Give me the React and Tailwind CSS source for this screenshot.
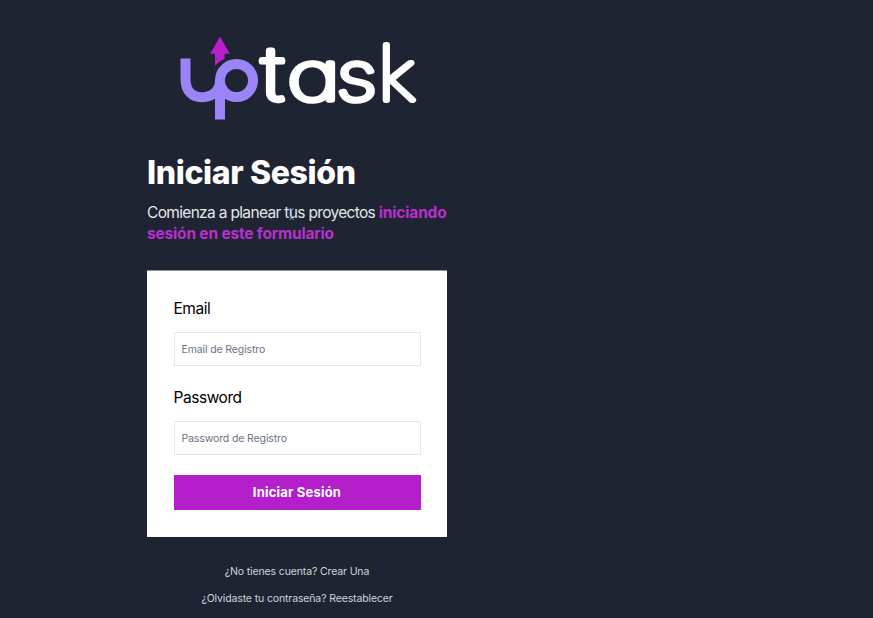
function Letter({ children, transform, className }) {
  return (
    <text
      className={className}
      style={{ fontFeatureSettings: '"cv11"' }}
      transform={transform}
      fill="#fff"
      stroke="#fff"
      strokeWidth="5.4"
      strokeLinejoin="round"
      strokeLinecap="round"
    >
      {children}
    </text>
  );
}

function Logo() {
  const inter = "font-['Inter',sans-serif] text-[66px] font-thin";
  const lato = "font-['Lato',sans-serif] text-[69px] font-thin";
  return (
    <svg
      className="mx-auto block h-[86px] w-[240px] overflow-visible"
      viewBox="177 35 240 86"
      role="img"
      aria-label="UpTask"
    >
      <path d="M220 36.5 229.8 53.8H224.5V59Q219 61 215 66V53.8H210.2Z" fill="#b91fce" />
      <g fill="none" stroke="#9b84f8" strokeWidth="10">
        <path d="M185.5 58.5V79C185.5 91 192 97.2 202 97.2C212 97.2 220 91 220 80.5" />
        <circle cx="236.5" cy="80.5" r="16.5" />
        <path d="M220 79V119.5" />
      </g>
      <Letter className={inter} transform="translate(262 99.5) scale(1.35 1.1)">t</Letter>
      <Letter className={inter} transform="translate(287.2 99.5) scale(1.38 1.02)">a</Letter>
      <Letter className={inter} transform="translate(336.5 99.5) scale(1.24 1.02)">s</Letter>
      <Letter className={lato} transform="translate(378.4 99.7) scale(1.16 1.09)">k</Letter>
    </svg>
  );
}

function Field({ id, label, type, placeholder }) {
  return (
    <div className="mb-5">
      <label htmlFor={id} className="block h-6 text-[15.5px] leading-6 tracking-[-0.45px] text-black">
        {label}
      </label>
      <input
        id={id}
        type={type}
        placeholder={placeholder}
        className="mt-[11px] block h-[34px] w-full border border-gray-200 bg-white px-[7px] text-[10.5px] tracking-[-0.12px] placeholder:text-gray-500"
      />
    </div>
  );
}

export default function App() {
  return (
    <div className="h-[618px] overflow-hidden bg-[#1e2431] font-['Inter',sans-serif]">
      <main className="ml-[147px] w-[300px] pt-[35px]">
        <Logo />
        <h1 className="mt-8 h-10 text-[32px] leading-10 font-extrabold tracking-[-0.37px] whitespace-nowrap text-white">
          Iniciar Sesión
        </h1>
        <p className="mt-[9px] text-[15.5px] leading-[21px] tracking-[-0.67px] whitespace-nowrap text-gray-200">
          Comienza a planear t
          <span className="relative">
            u
            <svg
              className="absolute top-[5px] left-0 h-3 w-[5px]"
              viewBox="0 0 5 12"
              fill="none"
              stroke="#9ca3af"
            >
              <path d="M.5 .5 2.5 1.5 4.5 .5M2.5 1.5V10.5M.5 11.5 2.5 10.5 4.5 11.5" />
            </svg>
          </span>
          s proyectos{' '}
          <span className="font-bold tracking-[-0.18px] text-[#b92fce]">
            iniciando
            <br />
            sesión en este formulario
          </span>
        </p>
        <form className="mt-[26px] h-[267px] border-t border-[#8f9299] bg-white px-[26.5px] pt-[26px]">
          <Field id="email" label="Email" type="email" placeholder="Email de Registro" />
          <Field id="password" label="Password" type="password" placeholder="Password de Registro" />
          <button
            type="button"
            className="block h-[35px] w-full bg-[#b41fcb] pt-px text-[13px] font-bold tracking-[0.2px] text-white"
          >
            Iniciar Sesión
          </button>
        </form>
        <nav className="mt-[27px] flex flex-col gap-[11px] text-center text-[10.5px] leading-4 tracking-[-0.13px] text-gray-300">
          <a>¿No tienes cuenta? Crear Una</a>
          <a>¿Olvidaste tu contraseña? Reestablecer</a>
        </nav>
      </main>
    </div>
  );
}
